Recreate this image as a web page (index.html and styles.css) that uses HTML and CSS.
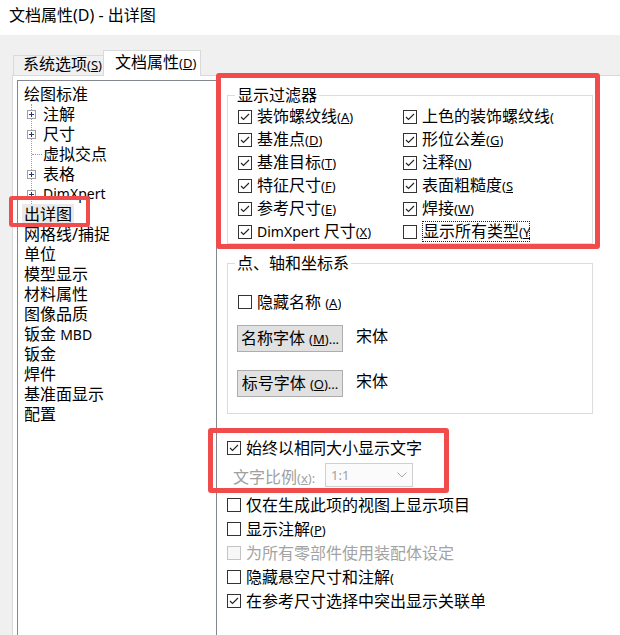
FILE: index.html
```html
<!DOCTYPE html>
<html>
<head>
<meta charset="utf-8">
<title>文档属性</title>
<link rel="stylesheet" href="styles.css">
</head>
<body>
<div class="title">文档属性(D) - 出详图</div>
<div class="tabs">
  <div class="tab">系统选项<span class="mn">(<u>S</u>)</span></div>
  <div class="tab active">文档属性<span class="mn">(<u>D</u>)</span></div>
</div>
<div class="panel">
  <div class="tree">
    <div class="node">绘图标准</div>
    <div class="children">
      <div class="child"><svg class="exp" width="9" height="9" viewBox="0 0 9 9"><rect x="0.5" y="0.5" width="8" height="8" fill="#fff" stroke="#a0a0a0"/><path d="M2 4.5H7M4.5 2V7" stroke="#23387a"/></svg>注解</div>
      <div class="child"><svg class="exp" width="9" height="9" viewBox="0 0 9 9"><rect x="0.5" y="0.5" width="8" height="8" fill="#fff" stroke="#a0a0a0"/><path d="M2 4.5H7M4.5 2V7" stroke="#23387a"/></svg>尺寸</div>
      <div class="child"><span class="hl"></span>虚拟交点</div>
      <div class="child"><svg class="exp" width="9" height="9" viewBox="0 0 9 9"><rect x="0.5" y="0.5" width="8" height="8" fill="#fff" stroke="#a0a0a0"/><path d="M2 4.5H7M4.5 2V7" stroke="#23387a"/></svg>表格</div>
      <div class="child"><svg class="exp" width="9" height="9" viewBox="0 0 9 9"><rect x="0.5" y="0.5" width="8" height="8" fill="#fff" stroke="#a0a0a0"/><path d="M2 4.5H7M4.5 2V7" stroke="#23387a"/></svg><span class="lat">DimXpert</span></div>
    </div>
    <div class="node"><span class="sel">出详图</span></div>
    <div class="node">网格线/捕捉</div>
    <div class="node">单位</div>
    <div class="node">模型显示</div>
    <div class="node">材料属性</div>
    <div class="node">图像品质</div>
    <div class="node">钣金 <span class="lat">MBD</span></div>
    <div class="node">钣金</div>
    <div class="node">焊件</div>
    <div class="node">基准面显示</div>
    <div class="node">配置</div>
  </div>

  <div class="content">
    <div class="group g1">
      <div class="gtitle">显示过滤器</div>
      <div class="grid">
        <div class="cb"><span class="box"><svg width="12" height="12" viewBox="0 0 12 12"><polyline points="2,6 4.5,8.5 10,3" fill="none" stroke="#222" stroke-width="1.1"/></svg></span><span class="t">装饰螺纹线<span class="mn">(<u>A</u>)</span></span></div>
        <div class="cb"><span class="box"><svg width="12" height="12" viewBox="0 0 12 12"><polyline points="2,6 4.5,8.5 10,3" fill="none" stroke="#222" stroke-width="1.1"/></svg></span><span class="t c1">上色的装饰螺纹线<span class="mn">(</span></span></div>
        <div class="cb"><span class="box"><svg width="12" height="12" viewBox="0 0 12 12"><polyline points="2,6 4.5,8.5 10,3" fill="none" stroke="#222" stroke-width="1.1"/></svg></span><span class="t">基准点<span class="mn">(<u>D</u>)</span></span></div>
        <div class="cb"><span class="box"><svg width="12" height="12" viewBox="0 0 12 12"><polyline points="2,6 4.5,8.5 10,3" fill="none" stroke="#222" stroke-width="1.1"/></svg></span><span class="t">形位公差<span class="mn">(<u>G</u>)</span></span></div>
        <div class="cb"><span class="box"><svg width="12" height="12" viewBox="0 0 12 12"><polyline points="2,6 4.5,8.5 10,3" fill="none" stroke="#222" stroke-width="1.1"/></svg></span><span class="t">基准目标<span class="mn">(<u>T</u>)</span></span></div>
        <div class="cb"><span class="box"><svg width="12" height="12" viewBox="0 0 12 12"><polyline points="2,6 4.5,8.5 10,3" fill="none" stroke="#222" stroke-width="1.1"/></svg></span><span class="t">注释<span class="mn">(<u>N</u>)</span></span></div>
        <div class="cb"><span class="box"><svg width="12" height="12" viewBox="0 0 12 12"><polyline points="2,6 4.5,8.5 10,3" fill="none" stroke="#222" stroke-width="1.1"/></svg></span><span class="t">特征尺寸<span class="mn">(<u>F</u>)</span></span></div>
        <div class="cb"><span class="box"><svg width="12" height="12" viewBox="0 0 12 12"><polyline points="2,6 4.5,8.5 10,3" fill="none" stroke="#222" stroke-width="1.1"/></svg></span><span class="t c2">表面粗糙度<span class="mn">(<u>S</u>)</span></span></div>
        <div class="cb"><span class="box"><svg width="12" height="12" viewBox="0 0 12 12"><polyline points="2,6 4.5,8.5 10,3" fill="none" stroke="#222" stroke-width="1.1"/></svg></span><span class="t">参考尺寸<span class="mn">(<u>E</u>)</span></span></div>
        <div class="cb"><span class="box"><svg width="12" height="12" viewBox="0 0 12 12"><polyline points="2,6 4.5,8.5 10,3" fill="none" stroke="#222" stroke-width="1.1"/></svg></span><span class="t">焊接<span class="mn">(<u>W</u>)</span></span></div>
        <div class="cb"><span class="box"><svg width="12" height="12" viewBox="0 0 12 12"><polyline points="2,6 4.5,8.5 10,3" fill="none" stroke="#222" stroke-width="1.1"/></svg></span><span class="t"><span class="lat">DimXpert</span> 尺寸<span class="mn">(<u>X</u>)</span></span></div>
        <div class="cb"><span class="box"></span><span class="t c3 focus">显示所有类型<span class="mn">(<u>Y</u>)</span></span></div>
      </div>
    </div>

    <div class="group g2">
      <div class="gtitle">点、轴和坐标系</div>
      <div class="cb row20"><span class="box"></span><span class="t">隐藏名称 <span class="mn">(<u>A</u>)</span></span></div>
      <div class="btnrow first"><div class="btn">名称字体 <span class="mn">(<u>M</u>)...</span></div><span class="fontname">宋体</span></div>
      <div class="btnrow second"><div class="btn">标号字体 <span class="mn">(<u>O</u>)...</span></div><span class="fontname">宋体</span></div>
    </div>

    <div class="cb row24 same"><span class="box"><svg width="12" height="12" viewBox="0 0 12 12"><polyline points="2,6 4.5,8.5 10,3" fill="none" stroke="#222" stroke-width="1.1"/></svg></span><span class="t">始终以相同大小显示文字</span></div>
    <div class="comborow">
      <span class="clabel">文字比例<span class="mn">(<u>x</u>):</span></span>
      <div class="combo"><span class="cval">1:1</span><svg width="10" height="6" viewBox="0 0 10 6"><polyline points="0.5,0.5 5,5 9.5,0.5" fill="none" stroke="#a8a8a8"/></svg></div>
    </div>
    <div class="cb row24"><span class="box"></span><span class="t">仅在生成此项的视图上显示项目</span></div>
    <div class="cb row24"><span class="box"></span><span class="t">显示注解<span class="mn">(<u>P</u>)</span></span></div>
    <div class="cb row24 disabled"><span class="box"></span><span class="t">为所有零部件使用装配体设定</span></div>
    <div class="cb row24"><span class="box"></span><span class="t c4">隐藏悬空尺寸和注解<span class="mn">(</span></span></div>
    <div class="cb row24"><span class="box"><svg width="12" height="12" viewBox="0 0 12 12"><polyline points="2,6 4.5,8.5 10,3" fill="none" stroke="#222" stroke-width="1.1"/></svg></span><span class="t c5">在参考尺寸选择中突出显示关联单</span></div>
  </div>
</div>

<div class="mark m1"></div>
<div class="mark m2"></div>
<div class="mark m3"></div>
</body>
</html>
```

FILE: styles.css
```css
* { box-sizing: border-box; }
html, body { margin: 0; padding: 0; }
body {
  width: 620px;
  height: 635px;
  overflow: hidden;
  position: relative;
  background: #f0f0f0;
  font-family: "Noto Sans", "Noto Sans CJK SC", sans-serif;
  font-size: 16px;
  color: #000;
}
u { text-decoration: underline; text-underline-offset: 1px; text-decoration-thickness: 1px; }
.mn { font-size: 13px; }
.lat { font-size: 14px; }

.title {
  height: 35px;
  background: #fff;
  padding-left: 9px;
  line-height: 31px;
  white-space: nowrap;
}

.tabs {
  display: flex;
  align-items: flex-end;
  height: 25px;
  margin-top: 15px;
  padding-left: 13px;
}
.tab {
  width: 91px;
  height: 20px;
  border: 1px solid #d9d9d9;
  border-bottom: none;
  background: #f0f0f0;
  padding-left: 9px;
  line-height: 17px;
  white-space: nowrap;
}
.tab.active {
  width: 98px;
  height: 26px;
  margin-left: -1px;
  margin-bottom: -1px;
  background: #fff;
  padding-left: 11px;
  line-height: 23px;
  position: relative;
  z-index: 1;
}

.panel {
  display: flex;
  align-items: flex-start;
  height: 560px;
  margin-left: 12px;
  background: #fff;
  border-left: 1px solid #d9d9d9;
  border-top: 1px solid #d9d9d9;
  overflow: hidden;
}

.tree {
  flex: none;
  width: 200px;
  height: 560px;
  margin: 4px 0 0 4px;
  border: 1px solid #828790;
  padding-top: 3px;
}
.node {
  height: 20px;
  line-height: 20px;
  padding-left: 6px;
  white-space: nowrap;
}
.sel {
  display: inline-block;
  background: #eaeaea;
  padding: 0 2px;
  margin-left: -2px;
  line-height: 20px;
}
.children {
  margin-left: 13px;
  border-left: 1px dotted #a0a0a0;
}
.child {
  display: flex;
  align-items: center;
  height: 20px;
  line-height: 20px;
  white-space: nowrap;
}
.exp {
  flex: none;
  margin-left: -5px;
  margin-right: 7px;
}
.hl {
  flex: none;
  width: 10px;
  margin-right: 1px;
  border-top: 1px dotted #a0a0a0;
}

.content {
  flex: none;
  width: 403px;
  padding-left: 10px;
}

.group {
  width: 366px;
  border: 1px solid #dcdcdc;
}
.g1 { margin-top: 19px; padding-left: 10px; }
.g2 { margin-top: 19px; padding-left: 10px; padding-bottom: 16px; }
.gtitle {
  width: fit-content;
  margin: -11px 0 0 -3px;
  padding: 0 2px;
  background: #fff;
  line-height: 20px;
  white-space: nowrap;
}

.grid {
  display: grid;
  grid-template-columns: 165px 1fr;
  grid-auto-rows: 23px;
}

.cb {
  display: flex;
  align-items: center;
  gap: 5px;
  white-space: nowrap;
}
.cb .t { overflow: hidden; white-space: nowrap; line-height: 20px; }
.box {
  flex: none;
  width: 14px;
  height: 14px;
  border: 1px solid #333;
  background: #fff;
  display: flex;
}
.box svg { display: block; }
.c1 { width: 134px; }
.c2 { width: 91px; }
.c3 { width: 108px; }
.c4 { width: 157px; }
.c5 { width: 239px; }
.focus { outline: 1px dotted #222; outline-offset: -1px; padding-left: 1px; }

.row20 { height: 20px; margin-top: 19px; }
.row24 { height: 24px; }
.same { margin-top: 22px; }

.btnrow {
  display: flex;
  align-items: flex-start;
  gap: 13px;
}
.btnrow.first { margin-top: 13px; }
.btnrow.second { margin-top: 18px; }
.btn {
  width: 106px;
  height: 27px;
  margin-left: -1px;
  border: 1px solid #adadad;
  background: #e1e1e1;
  text-align: center;
  line-height: 25px;
  white-space: nowrap;
}
.fontname { line-height: 22px; }

.comborow {
  display: flex;
  align-items: center;
  height: 24px;
  margin-top: 3px;
  margin-bottom: 6px;
  padding-left: 6px;
  color: #a0a0a0;
}
.clabel { width: 92px; white-space: nowrap; line-height: 24px; padding-top: 4px; }
.combo {
  display: flex;
  align-items: center;
  justify-content: space-between;
  width: 88px;
  height: 24px;
  border: 1px solid #d0d0d0;
  background: #fbfbfb;
  padding: 0 5px 0 5px;
}
.cval { font-size: 13px; color: #a0a0a0; }

.disabled { color: #a3a3a3; }
.disabled .box { border-color: #c4c4c4; background: #f7f7f7; }

.mark {
  position: absolute;
  border-style: solid;
  border-color: #f04c4c;
  border-radius: 3px;
}
.m1 { left: 9px; top: 196px; width: 81px; height: 31px; border-width: 4px; }
.m2 { left: 216px; top: 73px; width: 384px; height: 176px; border-width: 5px; }
.m3 { left: 208px; top: 428px; width: 241px; height: 65px; border-width: 5px; }
```
